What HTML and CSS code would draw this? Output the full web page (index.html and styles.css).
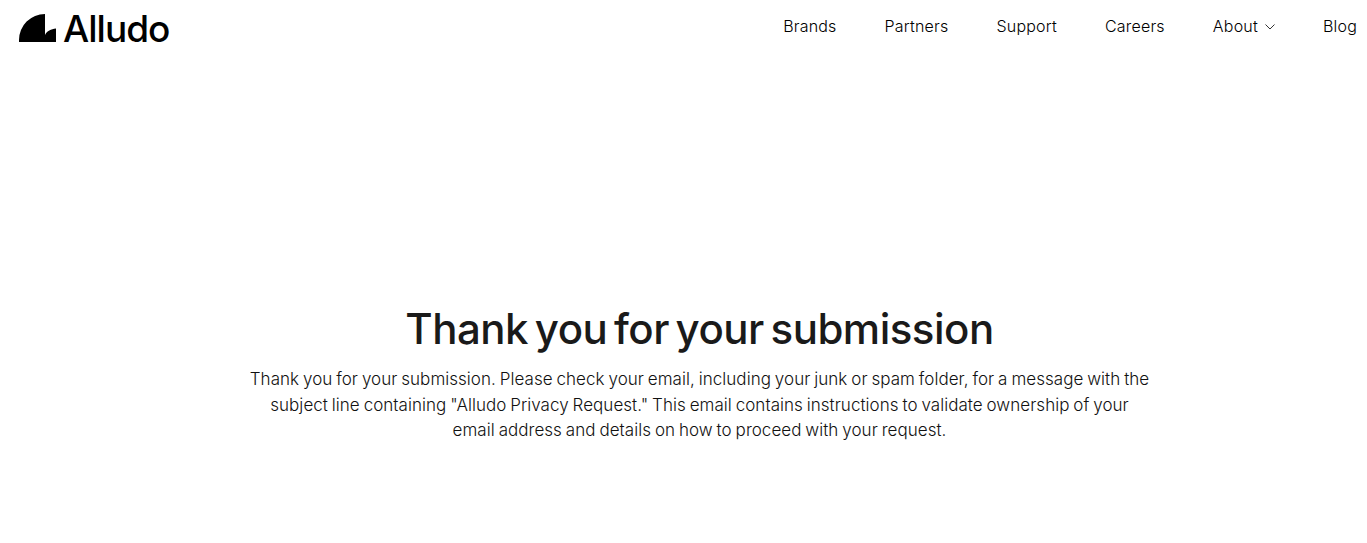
FILE: index.html
```html
<!DOCTYPE html>
<html lang="en">
<head>
<meta charset="utf-8">
<title>Alludo</title>
<link rel="stylesheet" href="styles.css">
</head>
<body>
<header class="header">
  <a class="logo">
    <svg class="logo-mark" viewBox="0 0 37 28"><path d="M0 28V26A26 26 0 0 1 26 0V21C28 17 32 15 37 14.500V28Z"/></svg>
    <span class="logo-text">Alludo</span>
  </a>
  <nav class="nav">
    <a>Brands</a>
    <a>Partners</a>
    <a>Support</a>
    <a>Careers</a>
    <a class="about"><span>About</span><svg class="chevron" viewBox="0 0 10 6"><path d="M.5 .5L5 5L9.500 .5"/></svg></a>
    <a>Blog</a>
  </nav>
</header>
<main class="main">
  <h1 class="title">Thank you for your submission</h1>
  <p class="copy">
    <span class="line">Thank you for your submission. Please check your email, including your junk or spam folder, for a message with the</span>
    <span class="line">subject line containing "Alludo Privacy Request." This email contains instructions to validate ownership of your</span>
    <span class="line">email address and details on how to proceed with your request.</span>
  </p>
</main>
</body>
</html>
```
FILE: styles.css
```css
body { margin: 0; background: #fff; color: #000; font-family: Inter, sans-serif; }
.header { display: flex; justify-content: space-between; padding: 14px 10px 0 19px; height: 40px; }
.logo { display: flex; gap: 7px; }
.logo-mark { width: 37px; height: 28px; }
.logo-text { font-size: 37px; line-height: 29px; font-weight: 450; letter-spacing: -1px; }
.nav { display: flex; align-items: flex-start; gap: 48px; font-size: 16px; font-weight: 300; letter-spacing: 0.2px; line-height: 25px; white-space: nowrap; }
.about { display: flex; align-items: center; gap: 7px; }
.chevron { width: 10px; height: 6px; fill: none; stroke: #000; stroke-width: 0.8; }
.main { padding: 250px 0 0 32px; text-align: center; color: #1a1a1a; }
.title { margin: 0; font-size: 42px; line-height: 50px; font-weight: 500; letter-spacing: -0.5px; word-spacing: -4px; white-space: nowrap; }
.copy { margin: 13px 0 0; font-size: 17px; font-weight: 300; line-height: 25.600px; letter-spacing: 0.035px; word-spacing: -0.9px; color: #111; }
.line { display: block; white-space: nowrap; }
```
